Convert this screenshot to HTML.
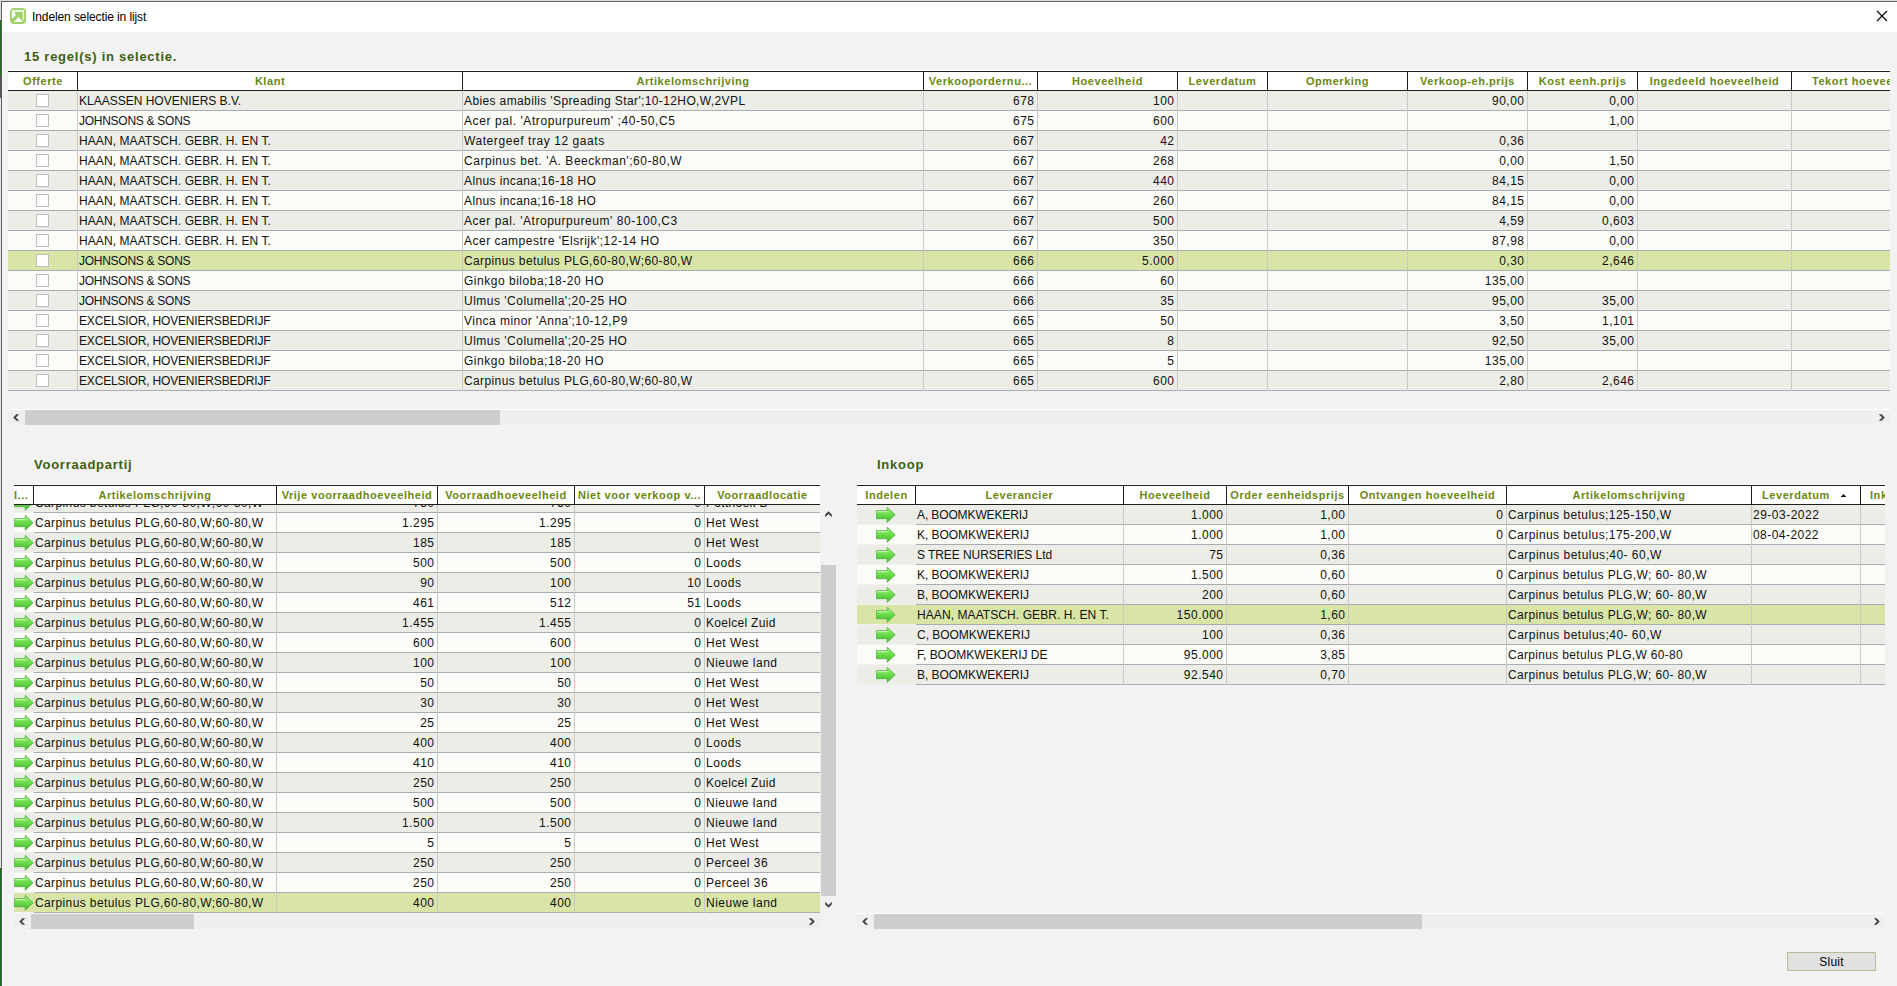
<!DOCTYPE html>
<html><head><meta charset="utf-8"><title>Indelen selectie in lijst</title>
<style>
html,body{margin:0;padding:0;}
body{width:1897px;height:986px;position:relative;overflow:hidden;background:#f2f2f2;font-family:"Liberation Sans", sans-serif;}
body div{position:absolute;box-sizing:border-box;}
svg{display:block;}
.hd{font-size:11px;font-weight:bold;color:#6a8812;white-space:nowrap;overflow:hidden;letter-spacing:0.55px;}
.td{font-size:12px;color:#111;white-space:nowrap;overflow:hidden;height:19px;line-height:21px;letter-spacing:0.25px;}
.h2{font-size:13px;font-weight:bold;color:#3e5e10;white-space:nowrap;letter-spacing:0.75px;}
.cb{width:13px;height:13px;background:#fff;border:1px solid #bdbdbd;}
</style></head><body>

<div style="left:0px;top:0px;width:1px;height:20px;background:#d6ddd0;"></div>
<div style="left:0px;top:20px;width:1px;height:56px;background:#1a6e1a;"></div>
<div style="left:0px;top:76px;width:1px;height:22px;background:#555555;"></div>
<div style="left:0px;top:98px;width:1px;height:770px;background:#e4e4e4;"></div>
<div style="left:0px;top:868px;width:1px;height:118px;background:#0f6a14;"></div>
<div style="left:1px;top:0px;width:1896px;height:1px;background:#dcdcdc;"></div>
<div style="left:1px;top:1px;width:1896px;height:1px;background:#5e5e5e;"></div>
<div style="left:1px;top:1px;width:1px;height:985px;background:#5e5e5e;"></div>
<div style="left:2px;top:2px;width:1895px;height:30px;background:#ffffff;"></div>
<div style="left:10px;top:8px;width:16px;height:16px"><svg width="16" height="16" viewBox="0 0 16 16"><rect x="0.9" y="0.9" width="14.2" height="14.2" rx="2.6" fill="#9fd16a" stroke="#9fd16a" stroke-width="1.8"/><path d="M1.9 1.9 H14.1 V3.9 H4.5 L5.7 6.9 L1.9 11 Z" fill="#ffffff"/><path d="M12.6 3.9 H14.1 V12 H12.6 Z" fill="#e4f2d4"/><path d="M3.9 13.9 H13.2 L8.5 9.1 Z" fill="#ffffff"/><path d="M1.9 1.9 H14.1 V3.9 H1.9 Z" fill="#e8f4dc"/></svg></div>
<div class="ttl" style="left:32px;top:9px;width:200px;height:17px;line-height:17px;text-align:left;font-size:12px;color:#000;white-space:nowrap;letter-spacing:-0.1px;">Indelen selectie in lijst</div>
<div style="left:1876px;top:10px;width:12px;height:12px"><svg width="12" height="12" viewBox="0 0 12 12"><path d="M1 1 L11 11 M11 1 L1 11" stroke="#000" stroke-width="1.1"/></svg></div>
<div class="h2" style="left:24px;top:48px;width:400px;height:18px;line-height:18px;text-align:left;">15 regel(s) in selectie.</div>
<div style="left:8px;top:70px;width:1882px;height:1px;background:#ffffff;"></div>
<div style="left:8px;top:71px;width:1882px;height:1px;background:#1e1e1e;"></div>
<div style="left:8px;top:72px;width:1882px;height:18px;background:#ffffff;"></div>
<div style="left:8px;top:90px;width:1882px;height:1px;background:#1e1e1e;"></div>
<div class="hd" style="left:9px;top:72px;width:68px;height:18px;line-height:18px;text-align:center;">Offerte</div>
<div class="hd" style="left:78px;top:72px;width:384px;height:18px;line-height:18px;text-align:center;">Klant</div>
<div class="hd" style="left:463px;top:72px;width:460px;height:18px;line-height:18px;text-align:center;">Artikelomschrijving</div>
<div class="hd" style="left:924px;top:72px;width:113px;height:18px;line-height:18px;text-align:center;">Verkoopordernu...</div>
<div class="hd" style="left:1038px;top:72px;width:139px;height:18px;line-height:18px;text-align:center;">Hoeveelheid</div>
<div class="hd" style="left:1178px;top:72px;width:89px;height:18px;line-height:18px;text-align:center;">Leverdatum</div>
<div class="hd" style="left:1268px;top:72px;width:139px;height:18px;line-height:18px;text-align:center;">Opmerking</div>
<div class="hd" style="left:1408px;top:72px;width:119px;height:18px;line-height:18px;text-align:center;">Verkoop-eh.prijs</div>
<div class="hd" style="left:1528px;top:72px;width:109px;height:18px;line-height:18px;text-align:center;">Kost eenh.prijs</div>
<div class="hd" style="left:1638px;top:72px;width:153px;height:18px;line-height:18px;text-align:center;">Ingedeeld hoeveelheid</div>
<div class="hd" style="left:1812.0px;top:72px;width:78.0px;height:18px;line-height:18px;text-align:left;">Tekort hoeveelheid</div>
<div style="left:77px;top:71px;width:1px;height:20px;background:#1e1e1e;"></div>
<div style="left:462px;top:71px;width:1px;height:20px;background:#1e1e1e;"></div>
<div style="left:923px;top:71px;width:1px;height:20px;background:#1e1e1e;"></div>
<div style="left:1037px;top:71px;width:1px;height:20px;background:#1e1e1e;"></div>
<div style="left:1177px;top:71px;width:1px;height:20px;background:#1e1e1e;"></div>
<div style="left:1267px;top:71px;width:1px;height:20px;background:#1e1e1e;"></div>
<div style="left:1407px;top:71px;width:1px;height:20px;background:#1e1e1e;"></div>
<div style="left:1527px;top:71px;width:1px;height:20px;background:#1e1e1e;"></div>
<div style="left:1637px;top:71px;width:1px;height:20px;background:#1e1e1e;"></div>
<div style="left:1791px;top:71px;width:1px;height:20px;background:#1e1e1e;"></div>
<div style="left:8px;top:91px;width:1882px;height:300px;overflow:hidden">
<div style="left:0;top:0px;width:1882px;height:19px;background:#ebede6"></div>
<div style="left:0px;top:19px;width:1882px;height:1px;background:#a5adb5"></div>
<div class="cb" style="left:28px;top:3px"></div>
<div class="td" style="left:71px;top:0px;width:382px;letter-spacing:-0.005px">KLAASSEN HOVENIERS B.V.</div>
<div class="td" style="left:456px;top:0px;width:458px;letter-spacing:0.378px">Abies amabilis &#x27;Spreading Star&#x27;;10-12HO,W,2VPL</div>
<div class="td" style="left:916px;top:0px;width:110.5px;text-align:right;letter-spacing:0.5px">678</div>
<div class="td" style="left:1030px;top:0px;width:136.5px;text-align:right;letter-spacing:0.5px">100</div>
<div class="td" style="left:1400px;top:0px;width:116.5px;text-align:right;letter-spacing:0.5px">90,00</div>
<div class="td" style="left:1520px;top:0px;width:106.5px;text-align:right;letter-spacing:0.5px">0,00</div>
<div style="left:0;top:20px;width:1882px;height:19px;background:#fbfcf7"></div>
<div style="left:0px;top:39px;width:1882px;height:1px;background:#a5adb5"></div>
<div class="cb" style="left:28px;top:23px"></div>
<div class="td" style="left:71px;top:20px;width:382px;letter-spacing:-0.271px">JOHNSONS &amp; SONS</div>
<div class="td" style="left:456px;top:20px;width:458px;letter-spacing:0.576px">Acer pal. &#x27;Atropurpureum&#x27; ;40-50,C5</div>
<div class="td" style="left:916px;top:20px;width:110.5px;text-align:right;letter-spacing:0.5px">675</div>
<div class="td" style="left:1030px;top:20px;width:136.5px;text-align:right;letter-spacing:0.5px">600</div>
<div class="td" style="left:1520px;top:20px;width:106.5px;text-align:right;letter-spacing:0.5px">1,00</div>
<div style="left:0;top:40px;width:1882px;height:19px;background:#ebede6"></div>
<div style="left:0px;top:59px;width:1882px;height:1px;background:#a5adb5"></div>
<div class="cb" style="left:28px;top:43px"></div>
<div class="td" style="left:71px;top:40px;width:382px;letter-spacing:0.082px">HAAN, MAATSCH. GEBR. H. EN T.</div>
<div class="td" style="left:456px;top:40px;width:458px;letter-spacing:0.573px">Watergeef tray 12 gaats</div>
<div class="td" style="left:916px;top:40px;width:110.5px;text-align:right;letter-spacing:0.5px">667</div>
<div class="td" style="left:1030px;top:40px;width:136.5px;text-align:right;letter-spacing:0.5px">42</div>
<div class="td" style="left:1400px;top:40px;width:116.5px;text-align:right;letter-spacing:0.5px">0,36</div>
<div style="left:0;top:60px;width:1882px;height:19px;background:#fbfcf7"></div>
<div style="left:0px;top:79px;width:1882px;height:1px;background:#a5adb5"></div>
<div class="cb" style="left:28px;top:63px"></div>
<div class="td" style="left:71px;top:60px;width:382px;letter-spacing:0.082px">HAAN, MAATSCH. GEBR. H. EN T.</div>
<div class="td" style="left:456px;top:60px;width:458px;letter-spacing:0.538px">Carpinus bet. &#x27;A. Beeckman&#x27;;60-80,W</div>
<div class="td" style="left:916px;top:60px;width:110.5px;text-align:right;letter-spacing:0.5px">667</div>
<div class="td" style="left:1030px;top:60px;width:136.5px;text-align:right;letter-spacing:0.5px">268</div>
<div class="td" style="left:1400px;top:60px;width:116.5px;text-align:right;letter-spacing:0.5px">0,00</div>
<div class="td" style="left:1520px;top:60px;width:106.5px;text-align:right;letter-spacing:0.5px">1,50</div>
<div style="left:0;top:80px;width:1882px;height:19px;background:#ebede6"></div>
<div style="left:0px;top:99px;width:1882px;height:1px;background:#a5adb5"></div>
<div class="cb" style="left:28px;top:83px"></div>
<div class="td" style="left:71px;top:80px;width:382px;letter-spacing:0.082px">HAAN, MAATSCH. GEBR. H. EN T.</div>
<div class="td" style="left:456px;top:80px;width:458px;letter-spacing:0.385px">Alnus incana;16-18 HO</div>
<div class="td" style="left:916px;top:80px;width:110.5px;text-align:right;letter-spacing:0.5px">667</div>
<div class="td" style="left:1030px;top:80px;width:136.5px;text-align:right;letter-spacing:0.5px">440</div>
<div class="td" style="left:1400px;top:80px;width:116.5px;text-align:right;letter-spacing:0.5px">84,15</div>
<div class="td" style="left:1520px;top:80px;width:106.5px;text-align:right;letter-spacing:0.5px">0,00</div>
<div style="left:0;top:100px;width:1882px;height:19px;background:#fbfcf7"></div>
<div style="left:0px;top:119px;width:1882px;height:1px;background:#a5adb5"></div>
<div class="cb" style="left:28px;top:103px"></div>
<div class="td" style="left:71px;top:100px;width:382px;letter-spacing:0.082px">HAAN, MAATSCH. GEBR. H. EN T.</div>
<div class="td" style="left:456px;top:100px;width:458px;letter-spacing:0.385px">Alnus incana;16-18 HO</div>
<div class="td" style="left:916px;top:100px;width:110.5px;text-align:right;letter-spacing:0.5px">667</div>
<div class="td" style="left:1030px;top:100px;width:136.5px;text-align:right;letter-spacing:0.5px">260</div>
<div class="td" style="left:1400px;top:100px;width:116.5px;text-align:right;letter-spacing:0.5px">84,15</div>
<div class="td" style="left:1520px;top:100px;width:106.5px;text-align:right;letter-spacing:0.5px">0,00</div>
<div style="left:0;top:120px;width:1882px;height:19px;background:#ebede6"></div>
<div style="left:0px;top:139px;width:1882px;height:1px;background:#a5adb5"></div>
<div class="cb" style="left:28px;top:123px"></div>
<div class="td" style="left:71px;top:120px;width:382px;letter-spacing:0.082px">HAAN, MAATSCH. GEBR. H. EN T.</div>
<div class="td" style="left:456px;top:120px;width:458px;letter-spacing:0.544px">Acer pal. &#x27;Atropurpureum&#x27; 80-100,C3</div>
<div class="td" style="left:916px;top:120px;width:110.5px;text-align:right;letter-spacing:0.5px">667</div>
<div class="td" style="left:1030px;top:120px;width:136.5px;text-align:right;letter-spacing:0.5px">500</div>
<div class="td" style="left:1400px;top:120px;width:116.5px;text-align:right;letter-spacing:0.5px">4,59</div>
<div class="td" style="left:1520px;top:120px;width:106.5px;text-align:right;letter-spacing:0.5px">0,603</div>
<div style="left:0;top:140px;width:1882px;height:19px;background:#fbfcf7"></div>
<div style="left:0px;top:159px;width:1882px;height:1px;background:#a5adb5"></div>
<div class="cb" style="left:28px;top:143px"></div>
<div class="td" style="left:71px;top:140px;width:382px;letter-spacing:0.082px">HAAN, MAATSCH. GEBR. H. EN T.</div>
<div class="td" style="left:456px;top:140px;width:458px;letter-spacing:0.491px">Acer campestre &#x27;Elsrijk&#x27;;12-14 HO</div>
<div class="td" style="left:916px;top:140px;width:110.5px;text-align:right;letter-spacing:0.5px">667</div>
<div class="td" style="left:1030px;top:140px;width:136.5px;text-align:right;letter-spacing:0.5px">350</div>
<div class="td" style="left:1400px;top:140px;width:116.5px;text-align:right;letter-spacing:0.5px">87,98</div>
<div class="td" style="left:1520px;top:140px;width:106.5px;text-align:right;letter-spacing:0.5px">0,00</div>
<div style="left:0;top:160px;width:1882px;height:19px;background:#d8e5a7"></div>
<div style="left:0px;top:179px;width:1882px;height:1px;background:#a5adb5"></div>
<div class="cb" style="left:28px;top:163px"></div>
<div class="td" style="left:71px;top:160px;width:382px;letter-spacing:-0.271px">JOHNSONS &amp; SONS</div>
<div class="td" style="left:456px;top:160px;width:458px;letter-spacing:0.386px">Carpinus betulus PLG,60-80,W;60-80,W</div>
<div class="td" style="left:916px;top:160px;width:110.5px;text-align:right;letter-spacing:0.5px">666</div>
<div class="td" style="left:1030px;top:160px;width:136.5px;text-align:right;letter-spacing:0.5px">5.000</div>
<div class="td" style="left:1400px;top:160px;width:116.5px;text-align:right;letter-spacing:0.5px">0,30</div>
<div class="td" style="left:1520px;top:160px;width:106.5px;text-align:right;letter-spacing:0.5px">2,646</div>
<div style="left:0;top:180px;width:1882px;height:19px;background:#fbfcf7"></div>
<div style="left:0px;top:199px;width:1882px;height:1px;background:#a5adb5"></div>
<div class="cb" style="left:28px;top:183px"></div>
<div class="td" style="left:71px;top:180px;width:382px;letter-spacing:-0.271px">JOHNSONS &amp; SONS</div>
<div class="td" style="left:456px;top:180px;width:458px;letter-spacing:0.514px">Ginkgo biloba;18-20 HO</div>
<div class="td" style="left:916px;top:180px;width:110.5px;text-align:right;letter-spacing:0.5px">666</div>
<div class="td" style="left:1030px;top:180px;width:136.5px;text-align:right;letter-spacing:0.5px">60</div>
<div class="td" style="left:1400px;top:180px;width:116.5px;text-align:right;letter-spacing:0.5px">135,00</div>
<div style="left:0;top:200px;width:1882px;height:19px;background:#ebede6"></div>
<div style="left:0px;top:219px;width:1882px;height:1px;background:#a5adb5"></div>
<div class="cb" style="left:28px;top:203px"></div>
<div class="td" style="left:71px;top:200px;width:382px;letter-spacing:-0.271px">JOHNSONS &amp; SONS</div>
<div class="td" style="left:456px;top:200px;width:458px;letter-spacing:0.492px">Ulmus &#x27;Columella&#x27;;20-25 HO</div>
<div class="td" style="left:916px;top:200px;width:110.5px;text-align:right;letter-spacing:0.5px">666</div>
<div class="td" style="left:1030px;top:200px;width:136.5px;text-align:right;letter-spacing:0.5px">35</div>
<div class="td" style="left:1400px;top:200px;width:116.5px;text-align:right;letter-spacing:0.5px">95,00</div>
<div class="td" style="left:1520px;top:200px;width:106.5px;text-align:right;letter-spacing:0.5px">35,00</div>
<div style="left:0;top:220px;width:1882px;height:19px;background:#fbfcf7"></div>
<div style="left:0px;top:239px;width:1882px;height:1px;background:#a5adb5"></div>
<div class="cb" style="left:28px;top:223px"></div>
<div class="td" style="left:71px;top:220px;width:382px;letter-spacing:-0.169px">EXCELSIOR, HOVENIERSBEDRIJF</div>
<div class="td" style="left:456px;top:220px;width:458px;letter-spacing:0.469px">Vinca minor &#x27;Anna&#x27;;10-12,P9</div>
<div class="td" style="left:916px;top:220px;width:110.5px;text-align:right;letter-spacing:0.5px">665</div>
<div class="td" style="left:1030px;top:220px;width:136.5px;text-align:right;letter-spacing:0.5px">50</div>
<div class="td" style="left:1400px;top:220px;width:116.5px;text-align:right;letter-spacing:0.5px">3,50</div>
<div class="td" style="left:1520px;top:220px;width:106.5px;text-align:right;letter-spacing:0.5px">1,101</div>
<div style="left:0;top:240px;width:1882px;height:19px;background:#ebede6"></div>
<div style="left:0px;top:259px;width:1882px;height:1px;background:#a5adb5"></div>
<div class="cb" style="left:28px;top:243px"></div>
<div class="td" style="left:71px;top:240px;width:382px;letter-spacing:-0.169px">EXCELSIOR, HOVENIERSBEDRIJF</div>
<div class="td" style="left:456px;top:240px;width:458px;letter-spacing:0.492px">Ulmus &#x27;Columella&#x27;;20-25 HO</div>
<div class="td" style="left:916px;top:240px;width:110.5px;text-align:right;letter-spacing:0.5px">665</div>
<div class="td" style="left:1030px;top:240px;width:136.5px;text-align:right;letter-spacing:0.5px">8</div>
<div class="td" style="left:1400px;top:240px;width:116.5px;text-align:right;letter-spacing:0.5px">92,50</div>
<div class="td" style="left:1520px;top:240px;width:106.5px;text-align:right;letter-spacing:0.5px">35,00</div>
<div style="left:0;top:260px;width:1882px;height:19px;background:#fbfcf7"></div>
<div style="left:0px;top:279px;width:1882px;height:1px;background:#a5adb5"></div>
<div class="cb" style="left:28px;top:263px"></div>
<div class="td" style="left:71px;top:260px;width:382px;letter-spacing:-0.169px">EXCELSIOR, HOVENIERSBEDRIJF</div>
<div class="td" style="left:456px;top:260px;width:458px;letter-spacing:0.514px">Ginkgo biloba;18-20 HO</div>
<div class="td" style="left:916px;top:260px;width:110.5px;text-align:right;letter-spacing:0.5px">665</div>
<div class="td" style="left:1030px;top:260px;width:136.5px;text-align:right;letter-spacing:0.5px">5</div>
<div class="td" style="left:1400px;top:260px;width:116.5px;text-align:right;letter-spacing:0.5px">135,00</div>
<div style="left:0;top:280px;width:1882px;height:19px;background:#ebede6"></div>
<div style="left:0px;top:299px;width:1882px;height:1px;background:#a5adb5"></div>
<div class="cb" style="left:28px;top:283px"></div>
<div class="td" style="left:71px;top:280px;width:382px;letter-spacing:-0.169px">EXCELSIOR, HOVENIERSBEDRIJF</div>
<div class="td" style="left:456px;top:280px;width:458px;letter-spacing:0.386px">Carpinus betulus PLG,60-80,W;60-80,W</div>
<div class="td" style="left:916px;top:280px;width:110.5px;text-align:right;letter-spacing:0.5px">665</div>
<div class="td" style="left:1030px;top:280px;width:136.5px;text-align:right;letter-spacing:0.5px">600</div>
<div class="td" style="left:1400px;top:280px;width:116.5px;text-align:right;letter-spacing:0.5px">2,80</div>
<div class="td" style="left:1520px;top:280px;width:106.5px;text-align:right;letter-spacing:0.5px">2,646</div>
<div style="left:69px;top:0;width:1px;height:300px;background:#c8c8c8"></div>
<div style="left:454px;top:0;width:1px;height:300px;background:#c8c8c8"></div>
<div style="left:915px;top:0;width:1px;height:300px;background:#c8c8c8"></div>
<div style="left:1029px;top:0;width:1px;height:300px;background:#c8c8c8"></div>
<div style="left:1169px;top:0;width:1px;height:300px;background:#c8c8c8"></div>
<div style="left:1259px;top:0;width:1px;height:300px;background:#c8c8c8"></div>
<div style="left:1399px;top:0;width:1px;height:300px;background:#c8c8c8"></div>
<div style="left:1519px;top:0;width:1px;height:300px;background:#c8c8c8"></div>
<div style="left:1629px;top:0;width:1px;height:300px;background:#c8c8c8"></div>
<div style="left:1783px;top:0;width:1px;height:300px;background:#c8c8c8"></div>
</div>
<div style="left:8px;top:409px;width:1882px;height:1px;background:#ffffff;"></div>
<div style="left:8px;top:410px;width:1882px;height:15px;background:#efefef;"></div>
<div style="left:25px;top:410px;width:475px;height:15px;background:#cdcdcd;"></div>
<div style="left:12.5px;top:414.0px;width:7px;height:7px"><svg width="7" height="7" viewBox="0 0 7 7"><path d="M3.4 0.2 H6.2 L2.9 3.5 L6.2 6.8 H3.4 L0.2 3.5 Z" fill="#444" /></svg></div>
<div style="left:1878.0px;top:414.0px;width:7px;height:7px"><svg width="7" height="7" viewBox="0 0 7 7"><path d="M3.4 0.2 H6.2 L2.9 3.5 L6.2 6.8 H3.4 L0.2 3.5 Z" fill="#444" transform="rotate(180 3.5 3.5)"/></svg></div>
<div class="h2" style="left:34px;top:456px;width:300px;height:18px;line-height:18px;text-align:left;">Voorraadpartij</div>
<div style="left:14px;top:484px;width:806px;height:1px;background:#ffffff;"></div>
<div style="left:14px;top:485px;width:806px;height:1px;background:#1e1e1e;"></div>
<div style="left:14px;top:486px;width:806px;height:18px;background:#ffffff;"></div>
<div style="left:14px;top:504px;width:806px;height:1px;background:#1e1e1e;"></div>
<div class="hd" style="left:14.0px;top:486px;width:19.0px;height:18px;line-height:18px;text-align:left;">I...</div>
<div class="hd" style="left:34px;top:486px;width:242px;height:18px;line-height:18px;text-align:center;">Artikelomschrijving</div>
<div class="hd" style="left:277px;top:486px;width:160px;height:18px;line-height:18px;text-align:center;">Vrije voorraadhoeveelheid</div>
<div class="hd" style="left:438px;top:486px;width:136px;height:18px;line-height:18px;text-align:center;">Voorraadhoeveelheid</div>
<div class="hd" style="left:575px;top:486px;width:129px;height:18px;line-height:18px;text-align:center;">Niet voor verkoop v...</div>
<div class="hd" style="left:705px;top:486px;width:115px;height:18px;line-height:18px;text-align:center;">Voorraadlocatie</div>
<div style="left:33px;top:485px;width:1px;height:20px;background:#1e1e1e;"></div>
<div style="left:276px;top:485px;width:1px;height:20px;background:#1e1e1e;"></div>
<div style="left:437px;top:485px;width:1px;height:20px;background:#1e1e1e;"></div>
<div style="left:574px;top:485px;width:1px;height:20px;background:#1e1e1e;"></div>
<div style="left:704px;top:485px;width:1px;height:20px;background:#1e1e1e;"></div>
<div style="left:14px;top:505px;width:806px;height:408px;overflow:hidden">
<div style="left:0;top:-12px;width:806px;height:19px;background:#ebede6"></div>
<div style="left:20px;top:7px;width:786px;height:1px;background:#a5adb5"></div>
<div style="left:0px;top:-10px;width:20px;height:16px"><svg width="20" height="16" viewBox="0 0 20 16"><defs><linearGradient id="ag" x1="0" y1="0" x2="0" y2="1"><stop offset="0" stop-color="#a6f08a"/><stop offset="0.45" stop-color="#6ede4c"/><stop offset="1" stop-color="#3fb52c"/></linearGradient></defs><path d="M0.4 3.6 H11.2 V0.3 L19.2 7.8 L11.2 15.3 V11.7 H0.4 Z" fill="url(#ag)" stroke="#4aa83a" stroke-width="0.7" stroke-linejoin="miter"/><path d="M1.3 4.6 H11.6" stroke="#c4f6ac" stroke-width="1.1"/></svg></div>
<div class="td" style="left:21px;top:-12px;width:240px;letter-spacing:0.386px">Carpinus betulus PLG,60-80,W;60-80,W</div>
<div class="td" style="left:263px;top:-12px;width:157.5px;text-align:right;letter-spacing:0.5px">750</div>
<div class="td" style="left:424px;top:-12px;width:133.5px;text-align:right;letter-spacing:0.5px">750</div>
<div class="td" style="left:561px;top:-12px;width:126.5px;text-align:right;letter-spacing:0.5px">0</div>
<div class="td" style="left:692px;top:-12px;width:113px;letter-spacing:0.3px">Potthoek B</div>
<div style="left:0;top:8px;width:806px;height:19px;background:#fbfcf7"></div>
<div style="left:20px;top:27px;width:786px;height:1px;background:#a5adb5"></div>
<div style="left:0px;top:10px;width:20px;height:16px"><svg width="20" height="16" viewBox="0 0 20 16"><defs><linearGradient id="ag" x1="0" y1="0" x2="0" y2="1"><stop offset="0" stop-color="#a6f08a"/><stop offset="0.45" stop-color="#6ede4c"/><stop offset="1" stop-color="#3fb52c"/></linearGradient></defs><path d="M0.4 3.6 H11.2 V0.3 L19.2 7.8 L11.2 15.3 V11.7 H0.4 Z" fill="url(#ag)" stroke="#4aa83a" stroke-width="0.7" stroke-linejoin="miter"/><path d="M1.3 4.6 H11.6" stroke="#c4f6ac" stroke-width="1.1"/></svg></div>
<div class="td" style="left:21px;top:8px;width:240px;letter-spacing:0.386px">Carpinus betulus PLG,60-80,W;60-80,W</div>
<div class="td" style="left:263px;top:8px;width:157.5px;text-align:right;letter-spacing:0.5px">1.295</div>
<div class="td" style="left:424px;top:8px;width:133.5px;text-align:right;letter-spacing:0.5px">1.295</div>
<div class="td" style="left:561px;top:8px;width:126.5px;text-align:right;letter-spacing:0.5px">0</div>
<div class="td" style="left:692px;top:8px;width:113px;letter-spacing:0.5px">Het West</div>
<div style="left:0;top:28px;width:806px;height:19px;background:#ebede6"></div>
<div style="left:20px;top:47px;width:786px;height:1px;background:#a5adb5"></div>
<div style="left:0px;top:30px;width:20px;height:16px"><svg width="20" height="16" viewBox="0 0 20 16"><defs><linearGradient id="ag" x1="0" y1="0" x2="0" y2="1"><stop offset="0" stop-color="#a6f08a"/><stop offset="0.45" stop-color="#6ede4c"/><stop offset="1" stop-color="#3fb52c"/></linearGradient></defs><path d="M0.4 3.6 H11.2 V0.3 L19.2 7.8 L11.2 15.3 V11.7 H0.4 Z" fill="url(#ag)" stroke="#4aa83a" stroke-width="0.7" stroke-linejoin="miter"/><path d="M1.3 4.6 H11.6" stroke="#c4f6ac" stroke-width="1.1"/></svg></div>
<div class="td" style="left:21px;top:28px;width:240px;letter-spacing:0.386px">Carpinus betulus PLG,60-80,W;60-80,W</div>
<div class="td" style="left:263px;top:28px;width:157.5px;text-align:right;letter-spacing:0.5px">185</div>
<div class="td" style="left:424px;top:28px;width:133.5px;text-align:right;letter-spacing:0.5px">185</div>
<div class="td" style="left:561px;top:28px;width:126.5px;text-align:right;letter-spacing:0.5px">0</div>
<div class="td" style="left:692px;top:28px;width:113px;letter-spacing:0.5px">Het West</div>
<div style="left:0;top:48px;width:806px;height:19px;background:#fbfcf7"></div>
<div style="left:20px;top:67px;width:786px;height:1px;background:#a5adb5"></div>
<div style="left:0px;top:50px;width:20px;height:16px"><svg width="20" height="16" viewBox="0 0 20 16"><defs><linearGradient id="ag" x1="0" y1="0" x2="0" y2="1"><stop offset="0" stop-color="#a6f08a"/><stop offset="0.45" stop-color="#6ede4c"/><stop offset="1" stop-color="#3fb52c"/></linearGradient></defs><path d="M0.4 3.6 H11.2 V0.3 L19.2 7.8 L11.2 15.3 V11.7 H0.4 Z" fill="url(#ag)" stroke="#4aa83a" stroke-width="0.7" stroke-linejoin="miter"/><path d="M1.3 4.6 H11.6" stroke="#c4f6ac" stroke-width="1.1"/></svg></div>
<div class="td" style="left:21px;top:48px;width:240px;letter-spacing:0.386px">Carpinus betulus PLG,60-80,W;60-80,W</div>
<div class="td" style="left:263px;top:48px;width:157.5px;text-align:right;letter-spacing:0.5px">500</div>
<div class="td" style="left:424px;top:48px;width:133.5px;text-align:right;letter-spacing:0.5px">500</div>
<div class="td" style="left:561px;top:48px;width:126.5px;text-align:right;letter-spacing:0.5px">0</div>
<div class="td" style="left:692px;top:48px;width:113px;letter-spacing:0.6px">Loods</div>
<div style="left:0;top:68px;width:806px;height:19px;background:#ebede6"></div>
<div style="left:20px;top:87px;width:786px;height:1px;background:#a5adb5"></div>
<div style="left:0px;top:70px;width:20px;height:16px"><svg width="20" height="16" viewBox="0 0 20 16"><defs><linearGradient id="ag" x1="0" y1="0" x2="0" y2="1"><stop offset="0" stop-color="#a6f08a"/><stop offset="0.45" stop-color="#6ede4c"/><stop offset="1" stop-color="#3fb52c"/></linearGradient></defs><path d="M0.4 3.6 H11.2 V0.3 L19.2 7.8 L11.2 15.3 V11.7 H0.4 Z" fill="url(#ag)" stroke="#4aa83a" stroke-width="0.7" stroke-linejoin="miter"/><path d="M1.3 4.6 H11.6" stroke="#c4f6ac" stroke-width="1.1"/></svg></div>
<div class="td" style="left:21px;top:68px;width:240px;letter-spacing:0.386px">Carpinus betulus PLG,60-80,W;60-80,W</div>
<div class="td" style="left:263px;top:68px;width:157.5px;text-align:right;letter-spacing:0.5px">90</div>
<div class="td" style="left:424px;top:68px;width:133.5px;text-align:right;letter-spacing:0.5px">100</div>
<div class="td" style="left:561px;top:68px;width:126.5px;text-align:right;letter-spacing:0.5px">10</div>
<div class="td" style="left:692px;top:68px;width:113px;letter-spacing:0.6px">Loods</div>
<div style="left:0;top:88px;width:806px;height:19px;background:#fbfcf7"></div>
<div style="left:20px;top:107px;width:786px;height:1px;background:#a5adb5"></div>
<div style="left:0px;top:90px;width:20px;height:16px"><svg width="20" height="16" viewBox="0 0 20 16"><defs><linearGradient id="ag" x1="0" y1="0" x2="0" y2="1"><stop offset="0" stop-color="#a6f08a"/><stop offset="0.45" stop-color="#6ede4c"/><stop offset="1" stop-color="#3fb52c"/></linearGradient></defs><path d="M0.4 3.6 H11.2 V0.3 L19.2 7.8 L11.2 15.3 V11.7 H0.4 Z" fill="url(#ag)" stroke="#4aa83a" stroke-width="0.7" stroke-linejoin="miter"/><path d="M1.3 4.6 H11.6" stroke="#c4f6ac" stroke-width="1.1"/></svg></div>
<div class="td" style="left:21px;top:88px;width:240px;letter-spacing:0.386px">Carpinus betulus PLG,60-80,W;60-80,W</div>
<div class="td" style="left:263px;top:88px;width:157.5px;text-align:right;letter-spacing:0.5px">461</div>
<div class="td" style="left:424px;top:88px;width:133.5px;text-align:right;letter-spacing:0.5px">512</div>
<div class="td" style="left:561px;top:88px;width:126.5px;text-align:right;letter-spacing:0.5px">51</div>
<div class="td" style="left:692px;top:88px;width:113px;letter-spacing:0.6px">Loods</div>
<div style="left:0;top:108px;width:806px;height:19px;background:#ebede6"></div>
<div style="left:20px;top:127px;width:786px;height:1px;background:#a5adb5"></div>
<div style="left:0px;top:110px;width:20px;height:16px"><svg width="20" height="16" viewBox="0 0 20 16"><defs><linearGradient id="ag" x1="0" y1="0" x2="0" y2="1"><stop offset="0" stop-color="#a6f08a"/><stop offset="0.45" stop-color="#6ede4c"/><stop offset="1" stop-color="#3fb52c"/></linearGradient></defs><path d="M0.4 3.6 H11.2 V0.3 L19.2 7.8 L11.2 15.3 V11.7 H0.4 Z" fill="url(#ag)" stroke="#4aa83a" stroke-width="0.7" stroke-linejoin="miter"/><path d="M1.3 4.6 H11.6" stroke="#c4f6ac" stroke-width="1.1"/></svg></div>
<div class="td" style="left:21px;top:108px;width:240px;letter-spacing:0.386px">Carpinus betulus PLG,60-80,W;60-80,W</div>
<div class="td" style="left:263px;top:108px;width:157.5px;text-align:right;letter-spacing:0.5px">1.455</div>
<div class="td" style="left:424px;top:108px;width:133.5px;text-align:right;letter-spacing:0.5px">1.455</div>
<div class="td" style="left:561px;top:108px;width:126.5px;text-align:right;letter-spacing:0.5px">0</div>
<div class="td" style="left:692px;top:108px;width:113px;letter-spacing:0.3px">Koelcel Zuid</div>
<div style="left:0;top:128px;width:806px;height:19px;background:#fbfcf7"></div>
<div style="left:20px;top:147px;width:786px;height:1px;background:#a5adb5"></div>
<div style="left:0px;top:130px;width:20px;height:16px"><svg width="20" height="16" viewBox="0 0 20 16"><defs><linearGradient id="ag" x1="0" y1="0" x2="0" y2="1"><stop offset="0" stop-color="#a6f08a"/><stop offset="0.45" stop-color="#6ede4c"/><stop offset="1" stop-color="#3fb52c"/></linearGradient></defs><path d="M0.4 3.6 H11.2 V0.3 L19.2 7.8 L11.2 15.3 V11.7 H0.4 Z" fill="url(#ag)" stroke="#4aa83a" stroke-width="0.7" stroke-linejoin="miter"/><path d="M1.3 4.6 H11.6" stroke="#c4f6ac" stroke-width="1.1"/></svg></div>
<div class="td" style="left:21px;top:128px;width:240px;letter-spacing:0.386px">Carpinus betulus PLG,60-80,W;60-80,W</div>
<div class="td" style="left:263px;top:128px;width:157.5px;text-align:right;letter-spacing:0.5px">600</div>
<div class="td" style="left:424px;top:128px;width:133.5px;text-align:right;letter-spacing:0.5px">600</div>
<div class="td" style="left:561px;top:128px;width:126.5px;text-align:right;letter-spacing:0.5px">0</div>
<div class="td" style="left:692px;top:128px;width:113px;letter-spacing:0.5px">Het West</div>
<div style="left:0;top:148px;width:806px;height:19px;background:#ebede6"></div>
<div style="left:20px;top:167px;width:786px;height:1px;background:#a5adb5"></div>
<div style="left:0px;top:150px;width:20px;height:16px"><svg width="20" height="16" viewBox="0 0 20 16"><defs><linearGradient id="ag" x1="0" y1="0" x2="0" y2="1"><stop offset="0" stop-color="#a6f08a"/><stop offset="0.45" stop-color="#6ede4c"/><stop offset="1" stop-color="#3fb52c"/></linearGradient></defs><path d="M0.4 3.6 H11.2 V0.3 L19.2 7.8 L11.2 15.3 V11.7 H0.4 Z" fill="url(#ag)" stroke="#4aa83a" stroke-width="0.7" stroke-linejoin="miter"/><path d="M1.3 4.6 H11.6" stroke="#c4f6ac" stroke-width="1.1"/></svg></div>
<div class="td" style="left:21px;top:148px;width:240px;letter-spacing:0.386px">Carpinus betulus PLG,60-80,W;60-80,W</div>
<div class="td" style="left:263px;top:148px;width:157.5px;text-align:right;letter-spacing:0.5px">100</div>
<div class="td" style="left:424px;top:148px;width:133.5px;text-align:right;letter-spacing:0.5px">100</div>
<div class="td" style="left:561px;top:148px;width:126.5px;text-align:right;letter-spacing:0.5px">0</div>
<div class="td" style="left:692px;top:148px;width:113px;letter-spacing:0.5px">Nieuwe land</div>
<div style="left:0;top:168px;width:806px;height:19px;background:#fbfcf7"></div>
<div style="left:20px;top:187px;width:786px;height:1px;background:#a5adb5"></div>
<div style="left:0px;top:170px;width:20px;height:16px"><svg width="20" height="16" viewBox="0 0 20 16"><defs><linearGradient id="ag" x1="0" y1="0" x2="0" y2="1"><stop offset="0" stop-color="#a6f08a"/><stop offset="0.45" stop-color="#6ede4c"/><stop offset="1" stop-color="#3fb52c"/></linearGradient></defs><path d="M0.4 3.6 H11.2 V0.3 L19.2 7.8 L11.2 15.3 V11.7 H0.4 Z" fill="url(#ag)" stroke="#4aa83a" stroke-width="0.7" stroke-linejoin="miter"/><path d="M1.3 4.6 H11.6" stroke="#c4f6ac" stroke-width="1.1"/></svg></div>
<div class="td" style="left:21px;top:168px;width:240px;letter-spacing:0.386px">Carpinus betulus PLG,60-80,W;60-80,W</div>
<div class="td" style="left:263px;top:168px;width:157.5px;text-align:right;letter-spacing:0.5px">50</div>
<div class="td" style="left:424px;top:168px;width:133.5px;text-align:right;letter-spacing:0.5px">50</div>
<div class="td" style="left:561px;top:168px;width:126.5px;text-align:right;letter-spacing:0.5px">0</div>
<div class="td" style="left:692px;top:168px;width:113px;letter-spacing:0.5px">Het West</div>
<div style="left:0;top:188px;width:806px;height:19px;background:#ebede6"></div>
<div style="left:20px;top:207px;width:786px;height:1px;background:#a5adb5"></div>
<div style="left:0px;top:190px;width:20px;height:16px"><svg width="20" height="16" viewBox="0 0 20 16"><defs><linearGradient id="ag" x1="0" y1="0" x2="0" y2="1"><stop offset="0" stop-color="#a6f08a"/><stop offset="0.45" stop-color="#6ede4c"/><stop offset="1" stop-color="#3fb52c"/></linearGradient></defs><path d="M0.4 3.6 H11.2 V0.3 L19.2 7.8 L11.2 15.3 V11.7 H0.4 Z" fill="url(#ag)" stroke="#4aa83a" stroke-width="0.7" stroke-linejoin="miter"/><path d="M1.3 4.6 H11.6" stroke="#c4f6ac" stroke-width="1.1"/></svg></div>
<div class="td" style="left:21px;top:188px;width:240px;letter-spacing:0.386px">Carpinus betulus PLG,60-80,W;60-80,W</div>
<div class="td" style="left:263px;top:188px;width:157.5px;text-align:right;letter-spacing:0.5px">30</div>
<div class="td" style="left:424px;top:188px;width:133.5px;text-align:right;letter-spacing:0.5px">30</div>
<div class="td" style="left:561px;top:188px;width:126.5px;text-align:right;letter-spacing:0.5px">0</div>
<div class="td" style="left:692px;top:188px;width:113px;letter-spacing:0.5px">Het West</div>
<div style="left:0;top:208px;width:806px;height:19px;background:#fbfcf7"></div>
<div style="left:20px;top:227px;width:786px;height:1px;background:#a5adb5"></div>
<div style="left:0px;top:210px;width:20px;height:16px"><svg width="20" height="16" viewBox="0 0 20 16"><defs><linearGradient id="ag" x1="0" y1="0" x2="0" y2="1"><stop offset="0" stop-color="#a6f08a"/><stop offset="0.45" stop-color="#6ede4c"/><stop offset="1" stop-color="#3fb52c"/></linearGradient></defs><path d="M0.4 3.6 H11.2 V0.3 L19.2 7.8 L11.2 15.3 V11.7 H0.4 Z" fill="url(#ag)" stroke="#4aa83a" stroke-width="0.7" stroke-linejoin="miter"/><path d="M1.3 4.6 H11.6" stroke="#c4f6ac" stroke-width="1.1"/></svg></div>
<div class="td" style="left:21px;top:208px;width:240px;letter-spacing:0.386px">Carpinus betulus PLG,60-80,W;60-80,W</div>
<div class="td" style="left:263px;top:208px;width:157.5px;text-align:right;letter-spacing:0.5px">25</div>
<div class="td" style="left:424px;top:208px;width:133.5px;text-align:right;letter-spacing:0.5px">25</div>
<div class="td" style="left:561px;top:208px;width:126.5px;text-align:right;letter-spacing:0.5px">0</div>
<div class="td" style="left:692px;top:208px;width:113px;letter-spacing:0.5px">Het West</div>
<div style="left:0;top:228px;width:806px;height:19px;background:#ebede6"></div>
<div style="left:20px;top:247px;width:786px;height:1px;background:#a5adb5"></div>
<div style="left:0px;top:230px;width:20px;height:16px"><svg width="20" height="16" viewBox="0 0 20 16"><defs><linearGradient id="ag" x1="0" y1="0" x2="0" y2="1"><stop offset="0" stop-color="#a6f08a"/><stop offset="0.45" stop-color="#6ede4c"/><stop offset="1" stop-color="#3fb52c"/></linearGradient></defs><path d="M0.4 3.6 H11.2 V0.3 L19.2 7.8 L11.2 15.3 V11.7 H0.4 Z" fill="url(#ag)" stroke="#4aa83a" stroke-width="0.7" stroke-linejoin="miter"/><path d="M1.3 4.6 H11.6" stroke="#c4f6ac" stroke-width="1.1"/></svg></div>
<div class="td" style="left:21px;top:228px;width:240px;letter-spacing:0.386px">Carpinus betulus PLG,60-80,W;60-80,W</div>
<div class="td" style="left:263px;top:228px;width:157.5px;text-align:right;letter-spacing:0.5px">400</div>
<div class="td" style="left:424px;top:228px;width:133.5px;text-align:right;letter-spacing:0.5px">400</div>
<div class="td" style="left:561px;top:228px;width:126.5px;text-align:right;letter-spacing:0.5px">0</div>
<div class="td" style="left:692px;top:228px;width:113px;letter-spacing:0.6px">Loods</div>
<div style="left:0;top:248px;width:806px;height:19px;background:#fbfcf7"></div>
<div style="left:20px;top:267px;width:786px;height:1px;background:#a5adb5"></div>
<div style="left:0px;top:250px;width:20px;height:16px"><svg width="20" height="16" viewBox="0 0 20 16"><defs><linearGradient id="ag" x1="0" y1="0" x2="0" y2="1"><stop offset="0" stop-color="#a6f08a"/><stop offset="0.45" stop-color="#6ede4c"/><stop offset="1" stop-color="#3fb52c"/></linearGradient></defs><path d="M0.4 3.6 H11.2 V0.3 L19.2 7.8 L11.2 15.3 V11.7 H0.4 Z" fill="url(#ag)" stroke="#4aa83a" stroke-width="0.7" stroke-linejoin="miter"/><path d="M1.3 4.6 H11.6" stroke="#c4f6ac" stroke-width="1.1"/></svg></div>
<div class="td" style="left:21px;top:248px;width:240px;letter-spacing:0.386px">Carpinus betulus PLG,60-80,W;60-80,W</div>
<div class="td" style="left:263px;top:248px;width:157.5px;text-align:right;letter-spacing:0.5px">410</div>
<div class="td" style="left:424px;top:248px;width:133.5px;text-align:right;letter-spacing:0.5px">410</div>
<div class="td" style="left:561px;top:248px;width:126.5px;text-align:right;letter-spacing:0.5px">0</div>
<div class="td" style="left:692px;top:248px;width:113px;letter-spacing:0.6px">Loods</div>
<div style="left:0;top:268px;width:806px;height:19px;background:#ebede6"></div>
<div style="left:20px;top:287px;width:786px;height:1px;background:#a5adb5"></div>
<div style="left:0px;top:270px;width:20px;height:16px"><svg width="20" height="16" viewBox="0 0 20 16"><defs><linearGradient id="ag" x1="0" y1="0" x2="0" y2="1"><stop offset="0" stop-color="#a6f08a"/><stop offset="0.45" stop-color="#6ede4c"/><stop offset="1" stop-color="#3fb52c"/></linearGradient></defs><path d="M0.4 3.6 H11.2 V0.3 L19.2 7.8 L11.2 15.3 V11.7 H0.4 Z" fill="url(#ag)" stroke="#4aa83a" stroke-width="0.7" stroke-linejoin="miter"/><path d="M1.3 4.6 H11.6" stroke="#c4f6ac" stroke-width="1.1"/></svg></div>
<div class="td" style="left:21px;top:268px;width:240px;letter-spacing:0.386px">Carpinus betulus PLG,60-80,W;60-80,W</div>
<div class="td" style="left:263px;top:268px;width:157.5px;text-align:right;letter-spacing:0.5px">250</div>
<div class="td" style="left:424px;top:268px;width:133.5px;text-align:right;letter-spacing:0.5px">250</div>
<div class="td" style="left:561px;top:268px;width:126.5px;text-align:right;letter-spacing:0.5px">0</div>
<div class="td" style="left:692px;top:268px;width:113px;letter-spacing:0.3px">Koelcel Zuid</div>
<div style="left:0;top:288px;width:806px;height:19px;background:#fbfcf7"></div>
<div style="left:20px;top:307px;width:786px;height:1px;background:#a5adb5"></div>
<div style="left:0px;top:290px;width:20px;height:16px"><svg width="20" height="16" viewBox="0 0 20 16"><defs><linearGradient id="ag" x1="0" y1="0" x2="0" y2="1"><stop offset="0" stop-color="#a6f08a"/><stop offset="0.45" stop-color="#6ede4c"/><stop offset="1" stop-color="#3fb52c"/></linearGradient></defs><path d="M0.4 3.6 H11.2 V0.3 L19.2 7.8 L11.2 15.3 V11.7 H0.4 Z" fill="url(#ag)" stroke="#4aa83a" stroke-width="0.7" stroke-linejoin="miter"/><path d="M1.3 4.6 H11.6" stroke="#c4f6ac" stroke-width="1.1"/></svg></div>
<div class="td" style="left:21px;top:288px;width:240px;letter-spacing:0.386px">Carpinus betulus PLG,60-80,W;60-80,W</div>
<div class="td" style="left:263px;top:288px;width:157.5px;text-align:right;letter-spacing:0.5px">500</div>
<div class="td" style="left:424px;top:288px;width:133.5px;text-align:right;letter-spacing:0.5px">500</div>
<div class="td" style="left:561px;top:288px;width:126.5px;text-align:right;letter-spacing:0.5px">0</div>
<div class="td" style="left:692px;top:288px;width:113px;letter-spacing:0.5px">Nieuwe land</div>
<div style="left:0;top:308px;width:806px;height:19px;background:#ebede6"></div>
<div style="left:20px;top:327px;width:786px;height:1px;background:#a5adb5"></div>
<div style="left:0px;top:310px;width:20px;height:16px"><svg width="20" height="16" viewBox="0 0 20 16"><defs><linearGradient id="ag" x1="0" y1="0" x2="0" y2="1"><stop offset="0" stop-color="#a6f08a"/><stop offset="0.45" stop-color="#6ede4c"/><stop offset="1" stop-color="#3fb52c"/></linearGradient></defs><path d="M0.4 3.6 H11.2 V0.3 L19.2 7.8 L11.2 15.3 V11.7 H0.4 Z" fill="url(#ag)" stroke="#4aa83a" stroke-width="0.7" stroke-linejoin="miter"/><path d="M1.3 4.6 H11.6" stroke="#c4f6ac" stroke-width="1.1"/></svg></div>
<div class="td" style="left:21px;top:308px;width:240px;letter-spacing:0.386px">Carpinus betulus PLG,60-80,W;60-80,W</div>
<div class="td" style="left:263px;top:308px;width:157.5px;text-align:right;letter-spacing:0.5px">1.500</div>
<div class="td" style="left:424px;top:308px;width:133.5px;text-align:right;letter-spacing:0.5px">1.500</div>
<div class="td" style="left:561px;top:308px;width:126.5px;text-align:right;letter-spacing:0.5px">0</div>
<div class="td" style="left:692px;top:308px;width:113px;letter-spacing:0.5px">Nieuwe land</div>
<div style="left:0;top:328px;width:806px;height:19px;background:#fbfcf7"></div>
<div style="left:20px;top:347px;width:786px;height:1px;background:#a5adb5"></div>
<div style="left:0px;top:330px;width:20px;height:16px"><svg width="20" height="16" viewBox="0 0 20 16"><defs><linearGradient id="ag" x1="0" y1="0" x2="0" y2="1"><stop offset="0" stop-color="#a6f08a"/><stop offset="0.45" stop-color="#6ede4c"/><stop offset="1" stop-color="#3fb52c"/></linearGradient></defs><path d="M0.4 3.6 H11.2 V0.3 L19.2 7.8 L11.2 15.3 V11.7 H0.4 Z" fill="url(#ag)" stroke="#4aa83a" stroke-width="0.7" stroke-linejoin="miter"/><path d="M1.3 4.6 H11.6" stroke="#c4f6ac" stroke-width="1.1"/></svg></div>
<div class="td" style="left:21px;top:328px;width:240px;letter-spacing:0.386px">Carpinus betulus PLG,60-80,W;60-80,W</div>
<div class="td" style="left:263px;top:328px;width:157.5px;text-align:right;letter-spacing:0.5px">5</div>
<div class="td" style="left:424px;top:328px;width:133.5px;text-align:right;letter-spacing:0.5px">5</div>
<div class="td" style="left:561px;top:328px;width:126.5px;text-align:right;letter-spacing:0.5px">0</div>
<div class="td" style="left:692px;top:328px;width:113px;letter-spacing:0.5px">Het West</div>
<div style="left:0;top:348px;width:806px;height:19px;background:#ebede6"></div>
<div style="left:20px;top:367px;width:786px;height:1px;background:#a5adb5"></div>
<div style="left:0px;top:350px;width:20px;height:16px"><svg width="20" height="16" viewBox="0 0 20 16"><defs><linearGradient id="ag" x1="0" y1="0" x2="0" y2="1"><stop offset="0" stop-color="#a6f08a"/><stop offset="0.45" stop-color="#6ede4c"/><stop offset="1" stop-color="#3fb52c"/></linearGradient></defs><path d="M0.4 3.6 H11.2 V0.3 L19.2 7.8 L11.2 15.3 V11.7 H0.4 Z" fill="url(#ag)" stroke="#4aa83a" stroke-width="0.7" stroke-linejoin="miter"/><path d="M1.3 4.6 H11.6" stroke="#c4f6ac" stroke-width="1.1"/></svg></div>
<div class="td" style="left:21px;top:348px;width:240px;letter-spacing:0.386px">Carpinus betulus PLG,60-80,W;60-80,W</div>
<div class="td" style="left:263px;top:348px;width:157.5px;text-align:right;letter-spacing:0.5px">250</div>
<div class="td" style="left:424px;top:348px;width:133.5px;text-align:right;letter-spacing:0.5px">250</div>
<div class="td" style="left:561px;top:348px;width:126.5px;text-align:right;letter-spacing:0.5px">0</div>
<div class="td" style="left:692px;top:348px;width:113px;letter-spacing:0.467px">Perceel 36</div>
<div style="left:0;top:368px;width:806px;height:19px;background:#fbfcf7"></div>
<div style="left:20px;top:387px;width:786px;height:1px;background:#a5adb5"></div>
<div style="left:0px;top:370px;width:20px;height:16px"><svg width="20" height="16" viewBox="0 0 20 16"><defs><linearGradient id="ag" x1="0" y1="0" x2="0" y2="1"><stop offset="0" stop-color="#a6f08a"/><stop offset="0.45" stop-color="#6ede4c"/><stop offset="1" stop-color="#3fb52c"/></linearGradient></defs><path d="M0.4 3.6 H11.2 V0.3 L19.2 7.8 L11.2 15.3 V11.7 H0.4 Z" fill="url(#ag)" stroke="#4aa83a" stroke-width="0.7" stroke-linejoin="miter"/><path d="M1.3 4.6 H11.6" stroke="#c4f6ac" stroke-width="1.1"/></svg></div>
<div class="td" style="left:21px;top:368px;width:240px;letter-spacing:0.386px">Carpinus betulus PLG,60-80,W;60-80,W</div>
<div class="td" style="left:263px;top:368px;width:157.5px;text-align:right;letter-spacing:0.5px">250</div>
<div class="td" style="left:424px;top:368px;width:133.5px;text-align:right;letter-spacing:0.5px">250</div>
<div class="td" style="left:561px;top:368px;width:126.5px;text-align:right;letter-spacing:0.5px">0</div>
<div class="td" style="left:692px;top:368px;width:113px;letter-spacing:0.467px">Perceel 36</div>
<div style="left:0;top:388px;width:806px;height:19px;background:#d8e5a7"></div>
<div style="left:20px;top:407px;width:786px;height:1px;background:#a5adb5"></div>
<div style="left:0px;top:390px;width:20px;height:16px"><svg width="20" height="16" viewBox="0 0 20 16"><defs><linearGradient id="ag" x1="0" y1="0" x2="0" y2="1"><stop offset="0" stop-color="#a6f08a"/><stop offset="0.45" stop-color="#6ede4c"/><stop offset="1" stop-color="#3fb52c"/></linearGradient></defs><path d="M0.4 3.6 H11.2 V0.3 L19.2 7.8 L11.2 15.3 V11.7 H0.4 Z" fill="url(#ag)" stroke="#4aa83a" stroke-width="0.7" stroke-linejoin="miter"/><path d="M1.3 4.6 H11.6" stroke="#c4f6ac" stroke-width="1.1"/></svg></div>
<div class="td" style="left:21px;top:388px;width:240px;letter-spacing:0.386px">Carpinus betulus PLG,60-80,W;60-80,W</div>
<div class="td" style="left:263px;top:388px;width:157.5px;text-align:right;letter-spacing:0.5px">400</div>
<div class="td" style="left:424px;top:388px;width:133.5px;text-align:right;letter-spacing:0.5px">400</div>
<div class="td" style="left:561px;top:388px;width:126.5px;text-align:right;letter-spacing:0.5px">0</div>
<div class="td" style="left:692px;top:388px;width:113px;letter-spacing:0.5px">Nieuwe land</div>
<div style="left:262px;top:0;width:1px;height:408px;background:#c8c8c8"></div>
<div style="left:423px;top:0;width:1px;height:408px;background:#c8c8c8"></div>
<div style="left:560px;top:0;width:1px;height:408px;background:#c8c8c8"></div>
<div style="left:690px;top:0;width:1px;height:408px;background:#c8c8c8"></div>
</div>
<div style="left:821px;top:565px;width:15px;height:331px;background:#cdcdcd;"></div>
<div style="left:825.0px;top:511.0px;width:7px;height:7px"><svg width="7" height="7" viewBox="0 0 7 7"><path d="M3.4 0.2 H6.2 L2.9 3.5 L6.2 6.8 H3.4 L0.2 3.5 Z" fill="#444" transform="rotate(90 3.5 3.5)"/></svg></div>
<div style="left:825.0px;top:901.0px;width:7px;height:7px"><svg width="7" height="7" viewBox="0 0 7 7"><path d="M3.4 0.2 H6.2 L2.9 3.5 L6.2 6.8 H3.4 L0.2 3.5 Z" fill="#444" transform="rotate(-90 3.5 3.5)"/></svg></div>
<div style="left:14px;top:914px;width:806px;height:15px;background:#efefef;"></div>
<div style="left:31px;top:914px;width:163px;height:15px;background:#cdcdcd;"></div>
<div style="left:18.5px;top:918.0px;width:7px;height:7px"><svg width="7" height="7" viewBox="0 0 7 7"><path d="M3.4 0.2 H6.2 L2.9 3.5 L6.2 6.8 H3.4 L0.2 3.5 Z" fill="#444" /></svg></div>
<div style="left:807.7px;top:918.0px;width:7px;height:7px"><svg width="7" height="7" viewBox="0 0 7 7"><path d="M3.4 0.2 H6.2 L2.9 3.5 L6.2 6.8 H3.4 L0.2 3.5 Z" fill="#444" transform="rotate(180 3.5 3.5)"/></svg></div>
<div class="h2" style="left:877px;top:456px;width:300px;height:18px;line-height:18px;text-align:left;">Inkoop</div>
<div style="left:857px;top:484px;width:1028px;height:1px;background:#ffffff;"></div>
<div style="left:857px;top:485px;width:1028px;height:1px;background:#1e1e1e;"></div>
<div style="left:857px;top:486px;width:1028px;height:18px;background:#ffffff;"></div>
<div style="left:857px;top:504px;width:1028px;height:1px;background:#1e1e1e;"></div>
<div class="hd" style="left:858px;top:486px;width:57px;height:18px;line-height:18px;text-align:center;">Indelen</div>
<div class="hd" style="left:916px;top:486px;width:207px;height:18px;line-height:18px;text-align:center;">Leverancier</div>
<div class="hd" style="left:1124px;top:486px;width:102px;height:18px;line-height:18px;text-align:center;">Hoeveelheid</div>
<div class="hd" style="left:1227px;top:486px;width:121px;height:18px;line-height:18px;text-align:center;">Order eenheidsprijs</div>
<div class="hd" style="left:1349px;top:486px;width:157px;height:18px;line-height:18px;text-align:center;">Ontvangen hoeveelheid</div>
<div class="hd" style="left:1507px;top:486px;width:244px;height:18px;line-height:18px;text-align:center;">Artikelomschrijving</div>
<div class="hd" style="left:1752px;top:486px;width:88.0px;height:18px;line-height:18px;text-align:center;overflow:visible;">Leverdatum</div>
<div class="hd" style="left:1870.0px;top:486px;width:15.0px;height:18px;line-height:18px;text-align:left;">Inkoper</div>
<div style="left:915px;top:485px;width:1px;height:20px;background:#1e1e1e;"></div>
<div style="left:1123px;top:485px;width:1px;height:20px;background:#1e1e1e;"></div>
<div style="left:1226px;top:485px;width:1px;height:20px;background:#1e1e1e;"></div>
<div style="left:1348px;top:485px;width:1px;height:20px;background:#1e1e1e;"></div>
<div style="left:1506px;top:485px;width:1px;height:20px;background:#1e1e1e;"></div>
<div style="left:1751px;top:485px;width:1px;height:20px;background:#1e1e1e;"></div>
<div style="left:1860px;top:485px;width:1px;height:20px;background:#1e1e1e;"></div>
<div style="left:857px;top:505px;width:1028px;height:180px;overflow:hidden">
<div style="left:0;top:0px;width:1028px;height:19px;background:#ebede6"></div>
<div style="left:59px;top:19px;width:969px;height:1px;background:#a5adb5"></div>
<div style="left:19px;top:2px;width:20px;height:16px"><svg width="20" height="16" viewBox="0 0 20 16"><defs><linearGradient id="ag" x1="0" y1="0" x2="0" y2="1"><stop offset="0" stop-color="#a6f08a"/><stop offset="0.45" stop-color="#6ede4c"/><stop offset="1" stop-color="#3fb52c"/></linearGradient></defs><path d="M0.4 3.6 H11.2 V0.3 L19.2 7.8 L11.2 15.3 V11.7 H0.4 Z" fill="url(#ag)" stroke="#4aa83a" stroke-width="0.7" stroke-linejoin="miter"/><path d="M1.3 4.6 H11.6" stroke="#c4f6ac" stroke-width="1.1"/></svg></div>
<div class="td" style="left:60px;top:0px;width:205px;letter-spacing:-0.121px">A, BOOMKWEKERIJ</div>
<div class="td" style="left:267px;top:0px;width:99.5px;text-align:right;letter-spacing:0.5px">1.000</div>
<div class="td" style="left:370px;top:0px;width:118.5px;text-align:right;letter-spacing:0.5px">1,00</div>
<div class="td" style="left:492px;top:0px;width:154.5px;text-align:right;letter-spacing:0.5px">0</div>
<div class="td" style="left:651px;top:0px;width:242px;letter-spacing:0.44px">Carpinus betulus;125-150,W</div>
<div class="td" style="left:896px;top:0px;width:106px;letter-spacing:0.5px">29-03-2022</div>
<div style="left:0;top:20px;width:1028px;height:19px;background:#fbfcf7"></div>
<div style="left:59px;top:39px;width:969px;height:1px;background:#a5adb5"></div>
<div style="left:19px;top:22px;width:20px;height:16px"><svg width="20" height="16" viewBox="0 0 20 16"><defs><linearGradient id="ag" x1="0" y1="0" x2="0" y2="1"><stop offset="0" stop-color="#a6f08a"/><stop offset="0.45" stop-color="#6ede4c"/><stop offset="1" stop-color="#3fb52c"/></linearGradient></defs><path d="M0.4 3.6 H11.2 V0.3 L19.2 7.8 L11.2 15.3 V11.7 H0.4 Z" fill="url(#ag)" stroke="#4aa83a" stroke-width="0.7" stroke-linejoin="miter"/><path d="M1.3 4.6 H11.6" stroke="#c4f6ac" stroke-width="1.1"/></svg></div>
<div class="td" style="left:60px;top:20px;width:205px;letter-spacing:-0.05px">K, BOOMKWEKERIJ</div>
<div class="td" style="left:267px;top:20px;width:99.5px;text-align:right;letter-spacing:0.5px">1.000</div>
<div class="td" style="left:370px;top:20px;width:118.5px;text-align:right;letter-spacing:0.5px">1,00</div>
<div class="td" style="left:492px;top:20px;width:154.5px;text-align:right;letter-spacing:0.5px">0</div>
<div class="td" style="left:651px;top:20px;width:242px;letter-spacing:0.44px">Carpinus betulus;175-200,W</div>
<div class="td" style="left:896px;top:20px;width:106px;letter-spacing:0.45px">08-04-2022</div>
<div style="left:0;top:40px;width:1028px;height:19px;background:#ebede6"></div>
<div style="left:59px;top:59px;width:969px;height:1px;background:#a5adb5"></div>
<div style="left:19px;top:42px;width:20px;height:16px"><svg width="20" height="16" viewBox="0 0 20 16"><defs><linearGradient id="ag" x1="0" y1="0" x2="0" y2="1"><stop offset="0" stop-color="#a6f08a"/><stop offset="0.45" stop-color="#6ede4c"/><stop offset="1" stop-color="#3fb52c"/></linearGradient></defs><path d="M0.4 3.6 H11.2 V0.3 L19.2 7.8 L11.2 15.3 V11.7 H0.4 Z" fill="url(#ag)" stroke="#4aa83a" stroke-width="0.7" stroke-linejoin="miter"/><path d="M1.3 4.6 H11.6" stroke="#c4f6ac" stroke-width="1.1"/></svg></div>
<div class="td" style="left:60px;top:40px;width:205px;letter-spacing:-0.074px">S TREE NURSERIES Ltd</div>
<div class="td" style="left:267px;top:40px;width:99.5px;text-align:right;letter-spacing:0.5px">75</div>
<div class="td" style="left:370px;top:40px;width:118.5px;text-align:right;letter-spacing:0.5px">0,36</div>
<div class="td" style="left:651px;top:40px;width:242px;letter-spacing:0.467px">Carpinus betulus;40- 60,W</div>
<div style="left:0;top:60px;width:1028px;height:19px;background:#fbfcf7"></div>
<div style="left:59px;top:79px;width:969px;height:1px;background:#a5adb5"></div>
<div style="left:19px;top:62px;width:20px;height:16px"><svg width="20" height="16" viewBox="0 0 20 16"><defs><linearGradient id="ag" x1="0" y1="0" x2="0" y2="1"><stop offset="0" stop-color="#a6f08a"/><stop offset="0.45" stop-color="#6ede4c"/><stop offset="1" stop-color="#3fb52c"/></linearGradient></defs><path d="M0.4 3.6 H11.2 V0.3 L19.2 7.8 L11.2 15.3 V11.7 H0.4 Z" fill="url(#ag)" stroke="#4aa83a" stroke-width="0.7" stroke-linejoin="miter"/><path d="M1.3 4.6 H11.6" stroke="#c4f6ac" stroke-width="1.1"/></svg></div>
<div class="td" style="left:60px;top:60px;width:205px;letter-spacing:-0.05px">K, BOOMKWEKERIJ</div>
<div class="td" style="left:267px;top:60px;width:99.5px;text-align:right;letter-spacing:0.5px">1.500</div>
<div class="td" style="left:370px;top:60px;width:118.5px;text-align:right;letter-spacing:0.5px">0,60</div>
<div class="td" style="left:492px;top:60px;width:154.5px;text-align:right;letter-spacing:0.5px">0</div>
<div class="td" style="left:651px;top:60px;width:242px;letter-spacing:0.371px">Carpinus betulus PLG,W; 60- 80,W</div>
<div style="left:0;top:80px;width:1028px;height:19px;background:#ebede6"></div>
<div style="left:59px;top:99px;width:969px;height:1px;background:#a5adb5"></div>
<div style="left:19px;top:82px;width:20px;height:16px"><svg width="20" height="16" viewBox="0 0 20 16"><defs><linearGradient id="ag" x1="0" y1="0" x2="0" y2="1"><stop offset="0" stop-color="#a6f08a"/><stop offset="0.45" stop-color="#6ede4c"/><stop offset="1" stop-color="#3fb52c"/></linearGradient></defs><path d="M0.4 3.6 H11.2 V0.3 L19.2 7.8 L11.2 15.3 V11.7 H0.4 Z" fill="url(#ag)" stroke="#4aa83a" stroke-width="0.7" stroke-linejoin="miter"/><path d="M1.3 4.6 H11.6" stroke="#c4f6ac" stroke-width="1.1"/></svg></div>
<div class="td" style="left:60px;top:80px;width:205px;letter-spacing:-0.05px">B, BOOMKWEKERIJ</div>
<div class="td" style="left:267px;top:80px;width:99.5px;text-align:right;letter-spacing:0.5px">200</div>
<div class="td" style="left:370px;top:80px;width:118.5px;text-align:right;letter-spacing:0.5px">0,60</div>
<div class="td" style="left:651px;top:80px;width:242px;letter-spacing:0.371px">Carpinus betulus PLG,W; 60- 80,W</div>
<div style="left:0;top:100px;width:1028px;height:19px;background:#d8e5a7"></div>
<div style="left:59px;top:119px;width:969px;height:1px;background:#a5adb5"></div>
<div style="left:19px;top:102px;width:20px;height:16px"><svg width="20" height="16" viewBox="0 0 20 16"><defs><linearGradient id="ag" x1="0" y1="0" x2="0" y2="1"><stop offset="0" stop-color="#a6f08a"/><stop offset="0.45" stop-color="#6ede4c"/><stop offset="1" stop-color="#3fb52c"/></linearGradient></defs><path d="M0.4 3.6 H11.2 V0.3 L19.2 7.8 L11.2 15.3 V11.7 H0.4 Z" fill="url(#ag)" stroke="#4aa83a" stroke-width="0.7" stroke-linejoin="miter"/><path d="M1.3 4.6 H11.6" stroke="#c4f6ac" stroke-width="1.1"/></svg></div>
<div class="td" style="left:60px;top:100px;width:205px;letter-spacing:0.082px">HAAN, MAATSCH. GEBR. H. EN T.</div>
<div class="td" style="left:267px;top:100px;width:99.5px;text-align:right;letter-spacing:0.5px">150.000</div>
<div class="td" style="left:370px;top:100px;width:118.5px;text-align:right;letter-spacing:0.5px">1,60</div>
<div class="td" style="left:651px;top:100px;width:242px;letter-spacing:0.371px">Carpinus betulus PLG,W; 60- 80,W</div>
<div style="left:0;top:120px;width:1028px;height:19px;background:#ebede6"></div>
<div style="left:59px;top:139px;width:969px;height:1px;background:#a5adb5"></div>
<div style="left:19px;top:122px;width:20px;height:16px"><svg width="20" height="16" viewBox="0 0 20 16"><defs><linearGradient id="ag" x1="0" y1="0" x2="0" y2="1"><stop offset="0" stop-color="#a6f08a"/><stop offset="0.45" stop-color="#6ede4c"/><stop offset="1" stop-color="#3fb52c"/></linearGradient></defs><path d="M0.4 3.6 H11.2 V0.3 L19.2 7.8 L11.2 15.3 V11.7 H0.4 Z" fill="url(#ag)" stroke="#4aa83a" stroke-width="0.7" stroke-linejoin="miter"/><path d="M1.3 4.6 H11.6" stroke="#c4f6ac" stroke-width="1.1"/></svg></div>
<div class="td" style="left:60px;top:120px;width:205px;letter-spacing:-0.029px">C, BOOMKWEKERIJ</div>
<div class="td" style="left:267px;top:120px;width:99.5px;text-align:right;letter-spacing:0.5px">100</div>
<div class="td" style="left:370px;top:120px;width:118.5px;text-align:right;letter-spacing:0.5px">0,36</div>
<div class="td" style="left:651px;top:120px;width:242px;letter-spacing:0.467px">Carpinus betulus;40- 60,W</div>
<div style="left:0;top:140px;width:1028px;height:19px;background:#fbfcf7"></div>
<div style="left:59px;top:159px;width:969px;height:1px;background:#a5adb5"></div>
<div style="left:19px;top:142px;width:20px;height:16px"><svg width="20" height="16" viewBox="0 0 20 16"><defs><linearGradient id="ag" x1="0" y1="0" x2="0" y2="1"><stop offset="0" stop-color="#a6f08a"/><stop offset="0.45" stop-color="#6ede4c"/><stop offset="1" stop-color="#3fb52c"/></linearGradient></defs><path d="M0.4 3.6 H11.2 V0.3 L19.2 7.8 L11.2 15.3 V11.7 H0.4 Z" fill="url(#ag)" stroke="#4aa83a" stroke-width="0.7" stroke-linejoin="miter"/><path d="M1.3 4.6 H11.6" stroke="#c4f6ac" stroke-width="1.1"/></svg></div>
<div class="td" style="left:60px;top:140px;width:205px;letter-spacing:-0.012px">F, BOOMKWEKERIJ DE</div>
<div class="td" style="left:267px;top:140px;width:99.5px;text-align:right;letter-spacing:0.5px">95.000</div>
<div class="td" style="left:370px;top:140px;width:118.5px;text-align:right;letter-spacing:0.5px">3,85</div>
<div class="td" style="left:651px;top:140px;width:242px;letter-spacing:0.322px">Carpinus betulus PLG,W 60-80</div>
<div style="left:0;top:160px;width:1028px;height:19px;background:#ebede6"></div>
<div style="left:59px;top:179px;width:969px;height:1px;background:#a5adb5"></div>
<div style="left:19px;top:162px;width:20px;height:16px"><svg width="20" height="16" viewBox="0 0 20 16"><defs><linearGradient id="ag" x1="0" y1="0" x2="0" y2="1"><stop offset="0" stop-color="#a6f08a"/><stop offset="0.45" stop-color="#6ede4c"/><stop offset="1" stop-color="#3fb52c"/></linearGradient></defs><path d="M0.4 3.6 H11.2 V0.3 L19.2 7.8 L11.2 15.3 V11.7 H0.4 Z" fill="url(#ag)" stroke="#4aa83a" stroke-width="0.7" stroke-linejoin="miter"/><path d="M1.3 4.6 H11.6" stroke="#c4f6ac" stroke-width="1.1"/></svg></div>
<div class="td" style="left:60px;top:160px;width:205px;letter-spacing:-0.05px">B, BOOMKWEKERIJ</div>
<div class="td" style="left:267px;top:160px;width:99.5px;text-align:right;letter-spacing:0.5px">92.540</div>
<div class="td" style="left:370px;top:160px;width:118.5px;text-align:right;letter-spacing:0.5px">0,70</div>
<div class="td" style="left:651px;top:160px;width:242px;letter-spacing:0.371px">Carpinus betulus PLG,W; 60- 80,W</div>
<div style="left:266px;top:0;width:1px;height:180px;background:#c8c8c8"></div>
<div style="left:369px;top:0;width:1px;height:180px;background:#c8c8c8"></div>
<div style="left:491px;top:0;width:1px;height:180px;background:#c8c8c8"></div>
<div style="left:649px;top:0;width:1px;height:180px;background:#c8c8c8"></div>
<div style="left:894px;top:0;width:1px;height:180px;background:#c8c8c8"></div>
<div style="left:1003px;top:0;width:1px;height:180px;background:#c8c8c8"></div>
</div>
<div style="left:1840px;top:493px;width:7px;height:5px"><svg width="7" height="5" viewBox="0 0 7 5"><path d="M0.6 4 L3.5 0.9 L6.4 4 Z" fill="#111"/></svg></div>
<div style="left:857px;top:913px;width:1028px;height:1px;background:#ffffff;"></div>
<div style="left:857px;top:914px;width:1028px;height:15px;background:#efefef;"></div>
<div style="left:874px;top:914px;width:548px;height:15px;background:#cdcdcd;"></div>
<div style="left:862.0px;top:918.0px;width:7px;height:7px"><svg width="7" height="7" viewBox="0 0 7 7"><path d="M3.4 0.2 H6.2 L2.9 3.5 L6.2 6.8 H3.4 L0.2 3.5 Z" fill="#444" /></svg></div>
<div style="left:1873.0px;top:918.0px;width:7px;height:7px"><svg width="7" height="7" viewBox="0 0 7 7"><path d="M3.4 0.2 H6.2 L2.9 3.5 L6.2 6.8 H3.4 L0.2 3.5 Z" fill="#444" transform="rotate(180 3.5 3.5)"/></svg></div>
<div style="left:1787px;top:952px;width:89px;height:19px;background:#e1e1e1;border:1px solid #b9bb92;font-size:12px;line-height:17px;padding-top:1px;text-align:center;color:#000;letter-spacing:0.2px">Sluit</div>
</body></html>
